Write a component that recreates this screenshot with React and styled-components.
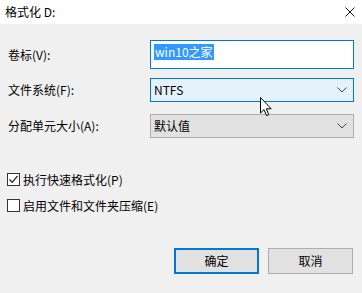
import React from "react";
import styled, { createGlobalStyle } from "styled-components";

const Global = createGlobalStyle`
  html, body {
    margin: 0;
    padding: 0;
    background: #f0f0f0;
  }
  * {
    box-sizing: border-box;
  }
`;

const Dialog = styled.div`
  position: relative;
  width: 362px;
  height: 293px;
  background: #f0f0f0;
  font-family: "Noto Sans CJK SC", "Noto Sans", sans-serif;
  font-size: 12px;
  color: #000;
  overflow: hidden;
`;

const TitleBar = styled.div`
  height: 24px;
  background: #fff;
  display: flex;
  align-items: center;
  justify-content: space-between;
  padding: 0 5px 0 5px;
`;

const TitleText = styled.div`
  font-size: 12px;
  line-height: 14px;
`;

const Body = styled.div`
  padding: 16px 8px 0 8px;
`;

const Row = styled.div`
  display: flex;
  align-items: center;
  height: ${(p) => p.h}px;
  margin-bottom: ${(p) => p.mb || 0}px;
`;

const Label = styled.div`
  width: 142px;
  line-height: 14px;
`;

const TextBox = styled.div`
  width: 204px;
  height: 29px;
  border: 1px solid #0078d7;
  background: #fff;
  padding: 3px 0 0 3px;
  display: flex;
  align-items: flex-start;
`;

const Selected = styled.span`
  background: #3399ff;
  color: #fff;
  line-height: 16px;
  padding: 0 1px;
`;

const Combo = styled.div`
  width: 204px;
  height: 24px;
  border: 1px solid ${(p) => (p.active ? "#0078d7" : "#adadad")};
  background: ${(p) => (p.active ? "#e5f1fb" : "#e1e1e1")};
  display: flex;
  align-items: center;
  justify-content: space-between;
  padding: 0 6px 0 3px;
  line-height: 14px;
`;

const Checks = styled.div`
  margin-top: 35px;
  display: flex;
  flex-direction: column;
  gap: 13px;
`;

const CheckRow = styled.label`
  display: flex;
  align-items: center;
  gap: 3px;
  height: 13px;
  margin-left: -1px;
  line-height: 14px;
`;

const Box = styled.span`
  width: 13px;
  height: 13px;
  border: 1px solid #333;
  background: #fff;
  display: flex;
  align-items: center;
  justify-content: center;
`;

const Buttons = styled.div`
  display: flex;
  justify-content: flex-end;
  gap: 9px;
  margin-top: 36px;
  padding-right: 1px;
`;

const Button = styled.div`
  width: 85px;
  height: 26px;
  background: #e1e1e1;
  border: ${(p) => (p.primary ? "2px solid #0078d7" : "1px solid #adadad")};
  display: flex;
  align-items: center;
  justify-content: center;
  line-height: 14px;
`;

const Cursor = styled.svg`
  position: absolute;
  left: 260px;
  top: 97px;
`;

const Chevron = () => (
  <svg width="10" height="6" viewBox="0 0 10 6">
    <polyline points="0.5,0.5 5,5 9.5,0.5" fill="none" stroke="#444" strokeWidth="1" />
  </svg>
);

const Tick = () => (
  <svg width="11" height="11" viewBox="0 0 11 11">
    <polyline points="1.5,5.5 4.2,8.3 9.5,2" fill="none" stroke="#222" strokeWidth="1.2" />
  </svg>
);

export default function App() {
  return (
    <Dialog>
      <Global />
      <TitleBar>
        <TitleText>格式化 D:</TitleText>
        <svg width="10" height="10" viewBox="0 0 10 10" style={{ marginRight: 2 }}>
          <path d="M0.5 0.5 L9.5 9.5 M9.5 0.5 L0.5 9.5" stroke="#111" strokeWidth="1" />
        </svg>
      </TitleBar>
      <Body>
        <Row h={29} mb={9}>
          <Label>卷标(V):</Label>
          <TextBox>
            <Selected>win10之家</Selected>
          </TextBox>
        </Row>
        <Row h={24} mb={12}>
          <Label>文件系统(F):</Label>
          <Combo active>
            <span>NTFS</span>
            <Chevron />
          </Combo>
        </Row>
        <Row h={24}>
          <Label>分配单元大小(A):</Label>
          <Combo>
            <span>默认值</span>
            <Chevron />
          </Combo>
        </Row>
        <Checks>
          <CheckRow>
            <Box>
              <Tick />
            </Box>
            执行快速格式化(P)
          </CheckRow>
          <CheckRow>
            <Box />
            启用文件和文件夹压缩(E)
          </CheckRow>
        </Checks>
        <Buttons>
          <Button primary>确定</Button>
          <Button>取消</Button>
        </Buttons>
      </Body>
      <Cursor width="13" height="20" viewBox="0 0 13 20">
        <path
          d="M0.5 0.5 L0.5 16 L4 12.6 L6.6 18.6 L8.8 17.6 L6.3 11.8 L11.2 11.8 Z"
          fill="#fff"
          stroke="#000"
          strokeWidth="1"
          strokeLinejoin="round"
        />
      </Cursor>
    </Dialog>
  );
}
